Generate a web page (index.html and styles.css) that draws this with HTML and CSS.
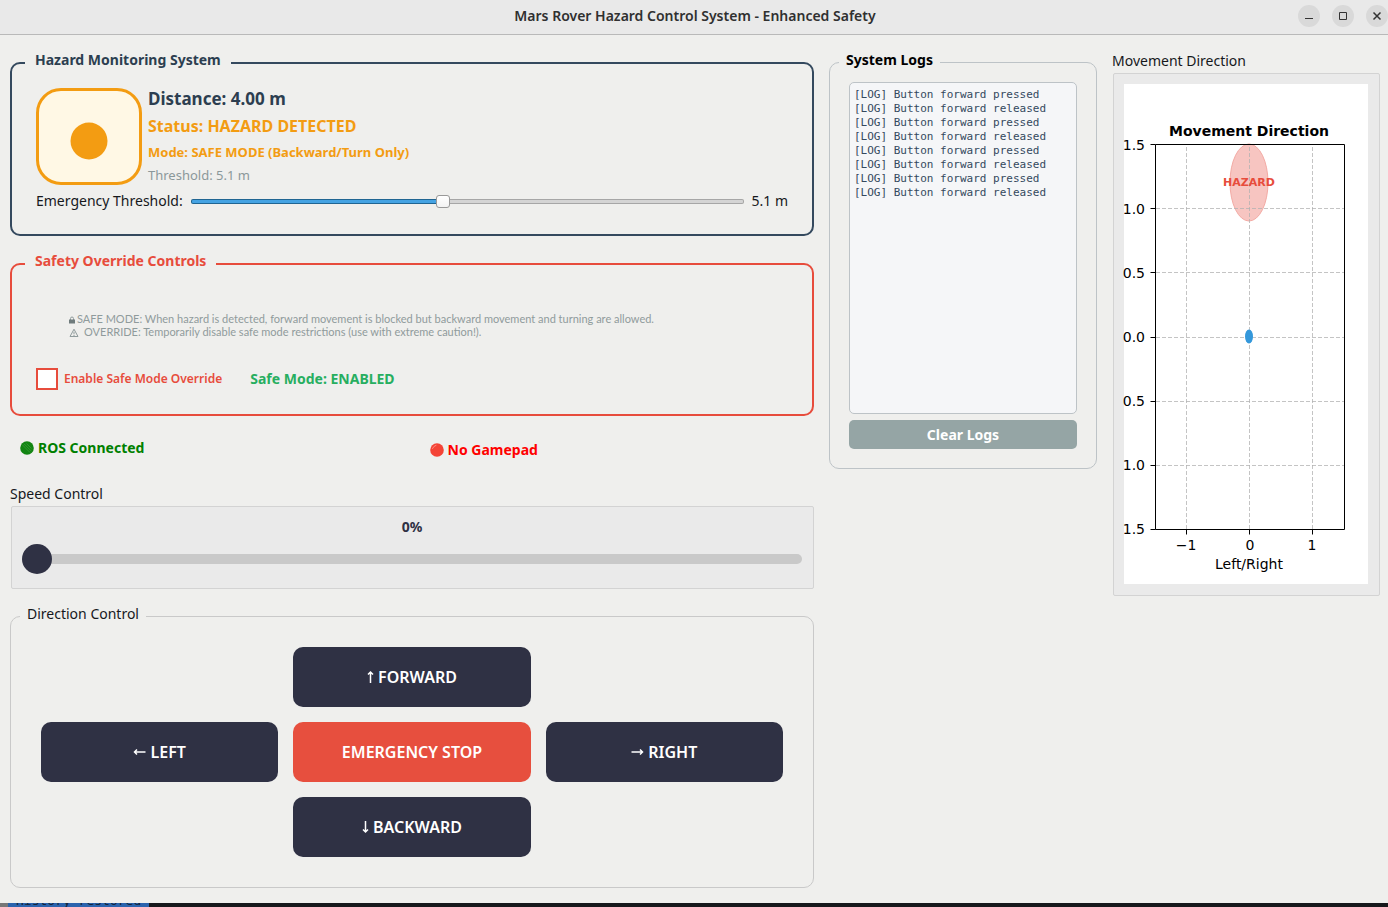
FILE: index.html
```html
<!DOCTYPE html>
<html lang="en">
<head>
<meta charset="utf-8">
<title>Mars Rover Hazard Control System - Enhanced Safety</title>
<link rel="stylesheet" href="styles.css">
</head>
<body>
<header class="titlebar">
  <h1 class="title">Mars Rover Hazard Control System - Enhanced Safety</h1>
  <div class="window-buttons">
    <button class="window-button" aria-label="Minimize"><svg width="22" height="22" viewBox="0 0 22 22"><path d="M7 13.5h8" /></svg></button>
    <button class="window-button" aria-label="Maximize"><svg width="22" height="22" viewBox="0 0 22 22"><path d="M7.5 7.5h7v7h-7z" /></svg></button>
    <button class="window-button" aria-label="Close"><svg width="22" height="22" viewBox="0 0 22 22"><path class="thick" d="M7.5 7.5l7 7M14.500 7.500l-7 7" /></svg></button>
  </div>
</header>

<main class="layout">
  <section class="controls">
    <fieldset class="group hazard">
      <legend>Hazard Monitoring System</legend>
      <div class="readout">
        <div class="indicator"><svg width="38" height="38" viewBox="0 0 38 38"><circle cx="19" cy="19" r="18.500" /></svg></div>
        <div class="readings">
          <p class="distance">Distance: 4.00 m</p>
          <p class="status">Status: HAZARD DETECTED</p>
          <p class="mode">Mode: SAFE MODE (Backward/Turn Only)</p>
          <p class="limit">Threshold: 5.1 m</p>
        </div>
      </div>
      <div class="threshold-row">
        <label for="threshold">Emergency Threshold:</label>
        <input class="threshold" id="threshold" type="range" min="1" max="10" step="0.1" value="5.1">
        <output for="threshold">5.1 m</output>
      </div>
    </fieldset>

    <fieldset class="group override">
      <legend>Safety Override Controls</legend>
      <div class="notes">
        <p><svg class="lock" width="8" height="10" viewBox="0 0 8 10"><path d="M1.500 5V3.500a1.500 1.500 0 0 1 3 0V5" /><rect x="0" y="4.500" width="6" height="4" /></svg>SAFE MODE: When hazard is detected, forward movement is blocked but backward movement and turning are allowed.</p>
        <p><svg class="warn" width="15" height="10" viewBox="0 0 15 10"><path d="M5 1.200L9 8.500H1zM5 3.800v2.500M5 7v1" /></svg>OVERRIDE: Temporarily disable safe mode restrictions (use with extreme caution!).</p>
      </div>
      <div class="override-row">
        <label class="check"><input type="checkbox">Enable Safe Mode Override</label>
        <span class="safe-state">Safe Mode: ENABLED</span>
      </div>
    </fieldset>

    <div class="connections">
      <p class="connected"><svg width="14" height="14" viewBox="0 0 14 14"><circle cx="7" cy="7" r="6.800" fill="#118411" /><path d="M2.500 4l7.500 7.500M4 2.800l7.500 7.500M6.500 2.500l5 5" stroke="#3c9c3c" stroke-width=".7" /></svg>ROS Connected</p>
      <p class="missing"><svg width="14" height="14" viewBox="0 0 14 14"><circle cx="7" cy="7" r="6.800" fill="#f44336" /><path d="M2.500 5.500Q3.500 3 6 2.300" fill="none" stroke="#ff8a80" stroke-width="1" stroke-linecap="round" /></svg>No Gamepad</p>
    </div>

    <section class="speed">
      <label for="speed">Speed Control</label>
      <div class="frame speed-frame">
        <output class="speed-value" for="speed">0%</output>
        <input class="speed-slider" id="speed" type="range" min="0" max="100" value="0">
      </div>
    </section>

    <fieldset class="group direction">
      <legend>Direction Control</legend>
      <div class="pad">
        <button class="move forward"><svg width="7" height="14" viewBox="0 0 7 14"><path d="M3.500 13V2M1 4.500L3.500 2L6 4.500" /></svg>FORWARD</button>
        <button class="move left"><svg width="13" height="14" viewBox="0 0 13 14"><path d="M12.500 7H1.500M4 4.500L1.500 7L4 9.500" /></svg>LEFT</button>
        <button class="move stop">EMERGENCY STOP</button>
        <button class="move right"><svg width="13" height="14" viewBox="0 0 13 14"><path d="M.5 7h11M9 4.500L11.500 7L9 9.500" /></svg>RIGHT</button>
        <button class="move backward"><svg width="7" height="14" viewBox="0 0 7 14"><path d="M3.500 1v11M1 9.500L3.500 12L6 9.500" /></svg>BACKWARD</button>
      </div>
    </fieldset>
  </section>

  <fieldset class="group logs">
    <legend>System Logs</legend>
    <textarea class="log" aria-label="System Logs" readonly>[LOG] Button forward pressed
[LOG] Button forward released
[LOG] Button forward pressed
[LOG] Button forward released
[LOG] Button forward pressed
[LOG] Button forward released
[LOG] Button forward pressed
[LOG] Button forward released</textarea>
    <button class="clear">Clear Logs</button>
  </fieldset>

  <section class="movement">
    <h2>Movement Direction</h2>
    <div class="frame plot-frame">
      <svg class="plot" viewBox="0 0 244 500" role="img" aria-label="Movement Direction plot">
        <ellipse class="hazard-zone" cx="125" cy="98.500" rx="19" ry="38.500" />
        <path class="grid" d="M62.500 445V61M125.500 445V61M188.500 445V61M32 124.500H220M32 188.500H220M32 253.500H220M32 317.500H220M32 381.500H220" />
        <ellipse class="rover" cx="125" cy="252.500" rx="4" ry="7" />
        <path class="axes" d="M31.500 60.500H220.500V445.500H31.500zM26.500 60.500h5M26.500 124.500h5M26.500 188.500h5M26.500 253.500h5M26.500 317.500h5M26.500 381.500h5M26.500 445.500h5M62.500 445.500v5M125.500 445.500v5M188.500 445.500v5" />
        <text class="plot-title" x="125" y="52">Movement Direction</text>
        <text class="zone-label" x="125" y="102">HAZARD</text>
        <g class="y-ticks">
          <text x="21" y="66">1.5</text>
          <text x="21" y="130">1.0</text>
          <text x="21" y="194">0.5</text>
          <text x="21" y="258">0.0</text>
          <text x="21" y="322">0.5</text>
          <text x="21" y="386">1.0</text>
          <text x="21" y="450">1.5</text>
        </g>
        <g class="x-ticks">
          <text x="62" y="466">−1</text>
          <text x="126" y="466">0</text>
          <text x="188" y="466">1</text>
          <text x="125" y="485">Left/Right</text>
        </g>
      </svg>
    </div>
  </section>
</main>
<footer class="terminal"><span>History restored</span></footer>
</body>
</html>
```
FILE: styles.css
```css
* { box-sizing: border-box; }
body {
  margin: 0;
  min-height: 100vh;
  display: flex;
  flex-direction: column;
  background: #efefed;
  color: #16181c;
  font: 15px/20px "Noto Sans", sans-serif;
}
p, h1, h2 { margin: 0; font: inherit; }
button, input, textarea { font: inherit; margin: 0; }
button { border: 0; cursor: pointer; }

.titlebar {
  display: grid;
  grid-template-columns: 1fr auto 1fr;
  align-items: center;
  height: 35px;
  padding: 0 0 3px 2px;
  background: #e9e9e9;
  border-bottom: 1px solid #b9b9b9;
}
.title { grid-column: 2; font-size: 14px; font-weight: 600; color: #303030; }
.window-buttons { display: flex; justify-content: flex-end; gap: 12px; }
.window-button { width: 22px; height: 22px; padding: 0; border-radius: 50%; background: #d9d9d9; }
.window-button svg { display: block; fill: none; stroke: #333; }
.window-button .thick { stroke-width: 1.5; }

.layout {
  flex: 1;
  display: grid;
  grid-template-columns: 3fr 1fr 1fr;
  align-items: start;
  gap: 15px;
  padding: 14px 8px 15px 10px;
}
.controls { display: flex; flex-direction: column; min-width: 0; }

.group { margin: 0; min-width: 0; border: 2px solid; border-radius: 10px; }
.group legend { padding: 1px 10px 7px; font-size: 14px; font-weight: 700; }

.hazard { border-color: #34495e; padding: 11px 24px 23px 24px; }
.group.hazard legend, .group.override legend { margin-left: -11px; }
.hazard legend { color: #2c3e50; }
.readout { display: flex; gap: 6px; }
.indicator {
  display: flex;
  align-items: center;
  justify-content: center;
  width: 106px;
  height: 97px;
  padding-top: 8px;
  border: 3px solid #f39c12;
  border-radius: 25px;
  background: #fff8e5;
}
.indicator svg { fill: #f39c12; }
.readings { white-space: nowrap; font-weight: 700; color: #f39c12; }
.readings .distance { font-size: 17px; line-height: 22px; padding-bottom: 6px; color: #2c3e50; }
.readings .status { font-size: 16px; line-height: 20px; padding-bottom: 6px; }
.readings .mode { font-size: 13px; line-height: 20px; padding-bottom: 4px; }
.readings .limit { font-size: 13px; line-height: 19px; font-weight: 400; color: #8b989a; }
.threshold-row { display: flex; align-items: center; gap: 8px; padding-top: 6px; font-size: 14px; }

.threshold, .speed-slider { appearance: none; display: block; flex: 1; min-width: 0; background: none; }
.threshold { height: 14px; }
.threshold::-webkit-slider-runnable-track {
  height: 5px;
  border: 1px solid transparent;
  border-radius: 2px;
  background: linear-gradient(90deg, #45a3e3 46%, #d4d4d4 46%) padding-box, linear-gradient(90deg, #206592 46%, #a6a6a6 46%) border-box;
}
.threshold::-webkit-slider-thumb {
  appearance: none;
  width: 14px;
  height: 13px;
  margin-top: -5px;
  border: 1px solid #999;
  border-radius: 3px;
  background: linear-gradient(#fff, #f3f3f3);
}

.override { margin-top: 14px; border-color: #e74c3c; padding: 34px 24px 24px 24px; }
.override legend { color: #e74c3c; }
.notes { padding-left: 33px; font: 11px/13px Lato, sans-serif; color: #8f9b9c; }
.notes svg { fill: none; stroke: currentColor; stroke-width: 1; vertical-align: -2px; }
.notes .lock rect { fill: #6f7b7c; stroke: none; }
.override-row { display: flex; align-items: center; gap: 28px; padding-top: 30px; color: #e74c3c; font-weight: 600; }
.check { display: flex; align-items: center; gap: 6px; font-size: 12px; }
.check input { appearance: none; width: 22px; height: 22px; border: 2px solid #e74c3c; background: #fff; }
.check input:checked { background: #e74c3c; }
.safe-state { color: #27ae60; font-size: 14px; font-weight: 700; }

.connections { display: grid; grid-template-columns: 1fr 1fr; gap: 15px; padding-top: 20px; font-size: 14px; font-weight: 700; }
.connections p { display: flex; align-items: center; gap: 4px; padding-left: 10px; }
.connected { color: #008000; }
.missing { color: #f00; padding-top: 4px; }

.speed { padding-top: 24px; font-size: 14px; }
.speed label { display: block; }
.frame { margin: 2px 0 0 1px; border: 1px solid #d3d3d3; border-radius: 2px; background: #eaeaea; }
.speed-frame { padding: 10px 11px 14px 10px; }
.speed-value { display: block; text-align: center; font-weight: 700; color: #2f3144; }
.speed-slider { width: 100%; height: 30px; margin-top: 7px; }
.speed-slider::-webkit-slider-runnable-track { height: 10px; border-radius: 5px; background: #c9c9c9; }
.speed-slider::-webkit-slider-thumb { appearance: none; width: 30px; height: 30px; margin-top: -10px; border-radius: 50%; background: #2f3144; }

.direction { margin-top: 15px; border: 1px solid #c9c9c9; padding: 19px 30px 30px; }
.direction legend { margin-left: -21px; padding: 0 7px 4px; font-weight: 400; }
.pad {
  display: grid;
  grid-template-columns: repeat(3, 1fr);
  grid-template-areas: ". forward ." "left stop right" ". backward .";
  gap: 15px;
}
.move {
  display: flex;
  align-items: center;
  justify-content: center;
  gap: 4px;
  height: 60px;
  padding: 0 6px;
  border-radius: 10px;
  background: #2f3144;
  color: #fff;
  font-size: 16px;
  font-weight: 600;
}
.move svg { fill: none; stroke: currentColor; stroke-width: 1.5; }
.forward { grid-area: forward; }
.left { grid-area: left; }
.right { grid-area: right; }
.backward { grid-area: backward; }
.stop { grid-area: stop; background: #e74f3e; }

.logs { border: 1px solid #bdc3c7; padding: 7px 19px 19px; }
.logs legend { margin-left: -10px; padding: 1px 7px 5px; color: #000; }
.log {
  display: block;
  width: 100%;
  height: 332px;
  padding: 5px 4px;
  resize: none;
  border: 1px solid #bdc3c7;
  border-radius: 5px;
  background: #f5f6f8;
  color: #34495e;
  font: 11px/14px "DejaVu Sans Mono", monospace;
}
.clear { display: block; width: 100%; height: 29px; margin-top: 6px; border-radius: 5px; background: #95a5a5; color: #fff; font-size: 14px; font-weight: 700; }

.movement h2 { padding-top: 2px; font-size: 14px; line-height: 20px; }
.plot-frame { padding: 10px 11px 11px 10px; }
.plot { display: block; width: 100%; background: #fff; overflow: visible; font: 14px "DejaVu Sans", sans-serif; fill: #000; }
.grid { stroke: #b0b0b0; stroke-opacity: .75; stroke-dasharray: 4 2; }
.axes { fill: none; stroke: #000; }
.hazard-zone { fill: #f7c5c1; stroke: #f3aaa4; }
.rover { fill: #3498db; }
.plot-title { font-weight: 700; text-anchor: middle; }
.zone-label { font-size: 11px; font-weight: 700; text-anchor: middle; fill: #e74c3c; }
.y-ticks { text-anchor: end; }
.x-ticks { text-anchor: middle; }

.terminal {
  display: flex;
  align-items: flex-end;
  height: 4px;
  overflow: hidden;
  background: #16181b;
  border-left: 8px solid #777;
  font: 13px/12px "DejaVu Sans Mono", monospace;
  color: #152439;
}
.terminal span { padding: 0 8px; background: #2b63ad; }
```
